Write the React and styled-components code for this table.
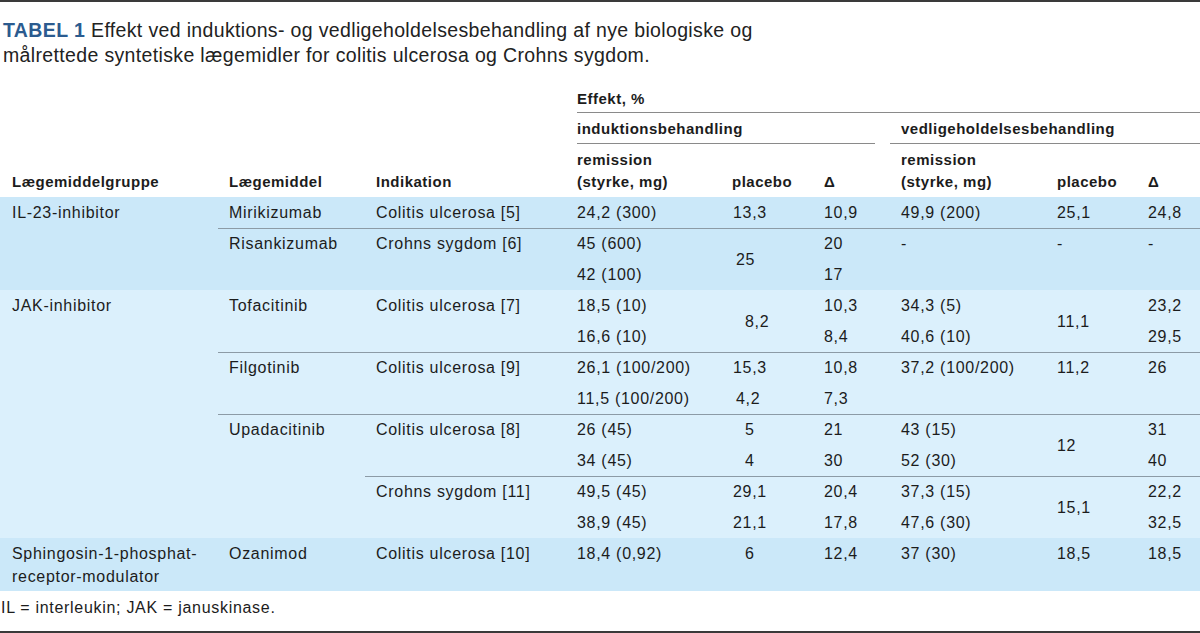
import React from 'react';
import styled, { createGlobalStyle } from 'styled-components';

const GlobalStyle = createGlobalStyle`
  html, body {
    margin: 0;
    padding: 0;
    background: #fff;
  }
  body {
    font-family: "Liberation Sans", Arial, sans-serif;
    color: #1c1c1c;
  }
`;

const tones = {
  dark: '#cbe8f9',
  light: '#dbf0fc',
};

const Page = styled.div`
  width: 1200px;
  border-top: 2px solid #3a3a3a;
  border-bottom: 2px solid #3a3a3a;
`;

const Caption = styled.p`
  margin: 0;
  padding: 16px 0 0 3px;
  font-size: 19.5px;
  line-height: 25px;
  letter-spacing: 0.35px;
  color: #222;
  width: 800px;
`;

const Label = styled.span`
  font-weight: 700;
  color: #2b5b8f;
  letter-spacing: 0.4px;
`;

const Table = styled.table`
  width: 1200px;
  margin-top: 20px;
  border-collapse: collapse;
  table-layout: fixed;
  font-size: 16px;
  letter-spacing: 0.7px;
`;

const Head = styled.th`
  padding: ${p => p.pad || '0 11px'};
  font-size: 15px;
  font-weight: 700;
  letter-spacing: 0.5px;
  line-height: 22px;
  text-align: left;
  vertical-align: bottom;
  white-space: nowrap;
`;

const HeadRule = styled.div`
  border-bottom: 1px solid #8a8a8a;
  padding: ${p => p.pad || '0 0 2px'};
`;

const Row = styled.tr`
  background: ${p => tones[p.tone]};
  td {
    border-top: ${p => (p.ruled ? '1px solid #8c9ba6' : 'none')};
    ${p => p.ruled && 'height: 30px; line-height: 30px;'}
  }
`;

const Cell = styled.td`
  padding: 0 11px;
  height: 31px;
  line-height: 31px;
  vertical-align: ${p => (p.mid ? 'middle' : 'top')};
  text-align: left;
  white-space: nowrap;
  ${p => p.wrap && `
    white-space: normal;
    line-height: 23px;
    padding: 4px 11px 3px 12px;
  `}
  ${p => p.tall && `
    line-height: 23px;
    padding-top: 4px;
    padding-bottom: 3px;
  `}
`;

const Note = styled.p`
  margin: 0;
  padding: 6px 0 12px 1px;
  font-size: 16px;
  line-height: 22px;
  letter-spacing: 0.7px;
`;

const widths = [218, 147, 201, 155, 92, 77, 156, 91, 63];

const P = ({ children, shift = 0, mid, rowSpan }) => (
  <Cell mid={mid} rowSpan={rowSpan} style={shift ? { paddingLeft: 11 + shift } : undefined}>
    {children}
  </Cell>
);

export default function App() {
  return (
    <Page>
      <GlobalStyle />
      <Caption>
        <Label>TABEL 1</Label> Effekt ved induktions- og vedligeholdelsesbehandling af nye biologiske og
        målrettede syntetiske lægemidler for colitis ulcerosa og Crohns sygdom.
      </Caption>
      <Table>
        <colgroup>
          {widths.map((w, i) => (
            <col key={i} style={{ width: w }} />
          ))}
        </colgroup>
        <thead>
          <tr>
            <Head colSpan={3} />
            <Head colSpan={6} pad="0 0 0 11px">
              <HeadRule pad="0 0 2px">Effekt, %</HeadRule>
            </Head>
          </tr>
          <tr>
            <Head colSpan={3} />
            <Head colSpan={3} pad="0 15px 0 11px">
              <HeadRule pad="5px 0 3px">induktionsbehandling</HeadRule>
            </Head>
            <Head colSpan={3} pad="0">
              <HeadRule pad="5px 0 3px 11px">vedligeholdelsesbehandling</HeadRule>
            </Head>
          </tr>
          <tr>
            <Head pad="0 11px 4px 12px">Lægemiddelgruppe</Head>
            <Head pad="0 11px 4px">Lægemiddel</Head>
            <Head pad="0 11px 4px">Indikation</Head>
            <Head pad="5px 11px 4px">
              remission
              <br />
              (styrke, mg)
            </Head>
            <Head pad="0 11px 4px">placebo</Head>
            <Head pad="0 11px 4px">Δ</Head>
            <Head pad="5px 11px 4px">
              remission
              <br />
              (styrke, mg)
            </Head>
            <Head pad="0 11px 4px">placebo</Head>
            <Head pad="0 11px 4px">Δ</Head>
          </tr>
        </thead>
        <tbody>
          <Row tone="dark">
            <Cell rowSpan={3} style={{ paddingLeft: 12 }}>IL-23-inhibitor</Cell>
            <Cell>Mirikizumab</Cell>
            <Cell>Colitis ulcerosa [5]</Cell>
            <Cell>24,2 (300)</Cell>
            <P shift={1}>13,3</P>
            <Cell>10,9</Cell>
            <Cell>49,9 (200)</Cell>
            <Cell>25,1</Cell>
            <Cell>24,8</Cell>
          </Row>
          <Row tone="dark" ruled>
            <Cell rowSpan={2}>Risankizumab</Cell>
            <Cell rowSpan={2}>Crohns sygdom [6]</Cell>
            <Cell>45 (600)</Cell>
            <P rowSpan={2} mid shift={4}>25</P>
            <Cell>20</Cell>
            <Cell>-</Cell>
            <Cell>-</Cell>
            <Cell>-</Cell>
          </Row>
          <Row tone="dark">
            <Cell>42 (100)</Cell>
            <Cell>17</Cell>
            <Cell />
            <Cell />
            <Cell />
          </Row>

          <Row tone="light">
            <Cell rowSpan={8} style={{ paddingLeft: 12 }}>JAK-inhibitor</Cell>
            <Cell rowSpan={2}>Tofacitinib</Cell>
            <Cell rowSpan={2}>Colitis ulcerosa [7]</Cell>
            <Cell>18,5 (10)</Cell>
            <P rowSpan={2} mid shift={13}>8,2</P>
            <Cell>10,3</Cell>
            <Cell>34,3 (5)</Cell>
            <Cell rowSpan={2} mid>11,1</Cell>
            <Cell>23,2</Cell>
          </Row>
          <Row tone="light">
            <Cell>16,6 (10)</Cell>
            <Cell>8,4</Cell>
            <Cell>40,6 (10)</Cell>
            <Cell>29,5</Cell>
          </Row>
          <Row tone="light" ruled>
            <Cell rowSpan={2}>Filgotinib</Cell>
            <Cell rowSpan={2}>Colitis ulcerosa [9]</Cell>
            <Cell>26,1 (100/200)</Cell>
            <P shift={1}>15,3</P>
            <Cell>10,8</Cell>
            <Cell>37,2 (100/200)</Cell>
            <Cell>11,2</Cell>
            <Cell>26</Cell>
          </Row>
          <Row tone="light">
            <Cell>11,5 (100/200)</Cell>
            <P shift={4}>4,2</P>
            <Cell>7,3</Cell>
            <Cell />
            <Cell />
            <Cell />
          </Row>
          <Row tone="light" ruled>
            <Cell rowSpan={4}>Upadacitinib</Cell>
            <Cell rowSpan={2}>Colitis ulcerosa [8]</Cell>
            <Cell>26 (45)</Cell>
            <P shift={13}>5</P>
            <Cell>21</Cell>
            <Cell>43 (15)</Cell>
            <Cell rowSpan={2} mid>12</Cell>
            <Cell>31</Cell>
          </Row>
          <Row tone="light">
            <Cell>34 (45)</Cell>
            <P shift={13}>4</P>
            <Cell>30</Cell>
            <Cell>52 (30)</Cell>
            <Cell>40</Cell>
          </Row>
          <Row tone="light" ruled>
            <Cell rowSpan={2}>Crohns sygdom [11]</Cell>
            <Cell>49,5 (45)</Cell>
            <P shift={1}>29,1</P>
            <Cell>20,4</Cell>
            <Cell>37,3 (15)</Cell>
            <Cell rowSpan={2} mid>15,1</Cell>
            <Cell>22,2</Cell>
          </Row>
          <Row tone="light">
            <Cell>38,9 (45)</Cell>
            <P shift={1}>21,1</P>
            <Cell>17,8</Cell>
            <Cell>47,6 (30)</Cell>
            <Cell>32,5</Cell>
          </Row>

          <Row tone="dark">
            <Cell wrap>Sphingosin-1-phosphat-receptor-modulator</Cell>
            <Cell tall>Ozanimod</Cell>
            <Cell tall>Colitis ulcerosa [10]</Cell>
            <Cell tall>18,4 (0,92)</Cell>
            <Cell tall style={{ paddingLeft: 24 }}>6</Cell>
            <Cell tall>12,4</Cell>
            <Cell tall>37 (30)</Cell>
            <Cell tall>18,5</Cell>
            <Cell tall>18,5</Cell>
          </Row>
        </tbody>
      </Table>
      <Note>IL = interleukin; JAK = januskinase.</Note>
    </Page>
  );
}
